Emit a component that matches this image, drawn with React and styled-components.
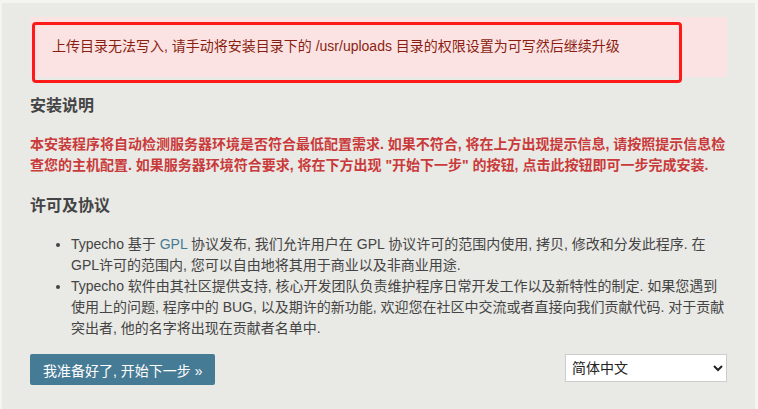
import styled, { createGlobalStyle } from "styled-components";

const GlobalStyle = createGlobalStyle`
  html, body {
    margin: 0;
    padding: 0;
    background: #f4f4f0;
    font-family: "Liberation Sans", "Noto Sans CJK SC", sans-serif;
    font-size: 14px;
    color: #444;
  }
`;

const App = () => {
  return (
    <>
      <GlobalStyle />
      <Page>
        <Panel>
          <Message>
            上传目录无法写入, 请手动将安装目录下的 /usr/uploads 目录的权限设置为可写然后继续升级
            <Highlight />
          </Message>
          <Heading>安装说明</Heading>
          <Notice>
            本安装程序将自动检测服务器环境是否符合最低配置需求. 如果不符合, 将在上方出现提示信息,
            请按照提示信息检查您的主机配置. 如果服务器环境符合要求, 将在下方出现 "开始下一步"
            的按钮, 点击此按钮即可一步完成安装.
          </Notice>
          <Heading $top={18}>许可及协议</Heading>
          <List>
            <li>
              Typecho 基于 <Link href="#">GPL</Link> 协议发布, 我们允许用户在 GPL
              协议许可的范围内使用, 拷贝, 修改和分发此程序. 在GPL许可的范围内,
              您可以自由地将其用于商业以及非商业用途.
            </li>
            <li>
              Typecho 软件由其社区提供支持, 核心开发团队负责维护程序日常开发工作以及新特性的制定.
              如果您遇到使用上的问题, 程序中的 BUG, 以及期许的新功能,
              欢迎您在社区中交流或者直接向我们贡献代码. 对于贡献突出者,
              他的名字将出现在贡献者名单中.
            </li>
          </List>
          <Footer>
            <PrimaryButton type="button">我准备好了, 开始下一步 »</PrimaryButton>
            <LangSelect defaultValue="zh_CN">
              <option value="zh_CN">简体中文</option>
              <option value="en">English</option>
            </LangSelect>
          </Footer>
        </Panel>
      </Page>
    </>
  );
};

const Page = styled.div`
  padding: 3px 3px 0 2px;
  min-height: 409px;
  box-sizing: border-box;
  display: flex;
`;

const Panel = styled.div`
  flex: 1;
  background: #e9e9e5;
  padding: 14px 28px 30px 28px;
`;

const Message = styled.div`
  position: relative;
  background: #fbe3e4;
  color: #8a1f11;
  border-radius: 2px;
  padding: 19px 22px 20px;
  line-height: 21px;
`;

const Highlight = styled.span`
  position: absolute;
  left: 2px;
  top: 5px;
  width: 650px;
  height: 61px;
  box-sizing: border-box;
  border: 3px solid #ff1a1a;
  border-radius: 4px;
  pointer-events: none;
`;

const Heading = styled.h3`
  margin: ${(p) => p.$top || 17}px 0 16px;
  font-size: 16px;
  line-height: 24px;
  font-weight: bold;
  color: #444;
`;

const Notice = styled.p`
  margin: 0;
  color: #c93a3a;
  font-weight: bold;
  line-height: 21px;
`;

const List = styled.ul`
  margin: 15px 0 15px;
  padding-left: 41px;
  line-height: 21px;
`;

const Link = styled.a`
  color: #467b96;
  text-decoration: none;
`;

const Footer = styled.div`
  display: flex;
  justify-content: space-between;
  align-items: flex-start;
`;

const PrimaryButton = styled.button`
  height: 31px;
  padding: 0 13px;
  border: none;
  border-radius: 2px;
  background: #467b96;
  color: #fff;
  font-family: inherit;
  font-size: 14px;
  cursor: pointer;
`;

const LangSelect = styled.select`
  width: 162px;
  height: 28px;
  padding: 0 2px;
  border: 1px solid #ccc;
  border-radius: 0;
  background: #fff;
  color: #222;
  font-family: "Liberation Sans", "Noto Sans CJK SC", sans-serif;
  font-size: 14px;
`;

export default App;
